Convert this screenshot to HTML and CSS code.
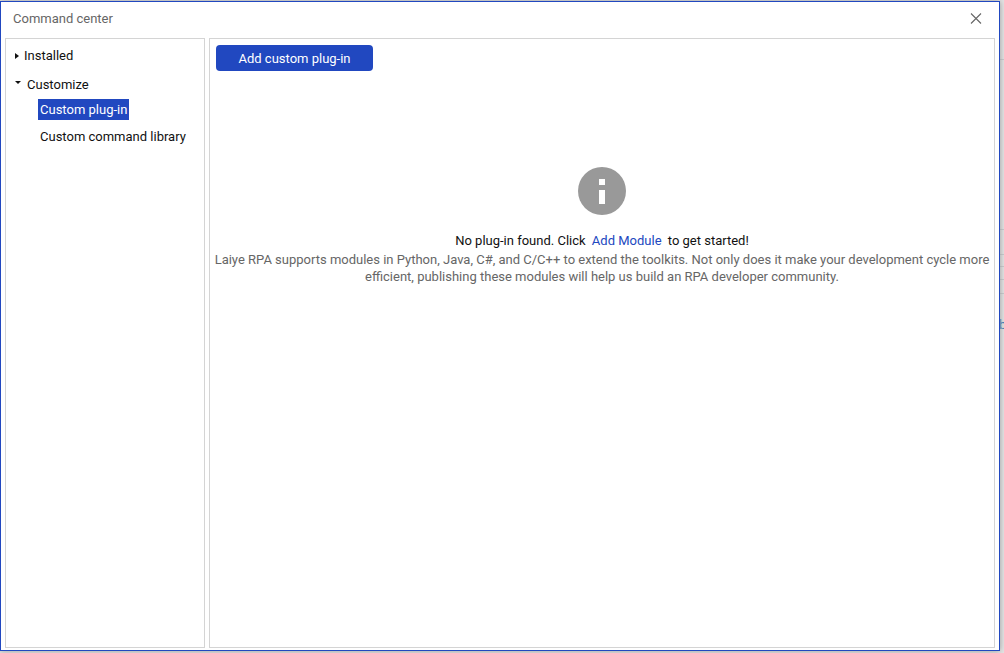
FILE: index.html
```html
<!DOCTYPE html>
<html lang="en">
<head>
<meta charset="utf-8">
<title>Command center</title>
<link rel="stylesheet" href="styles.css">
</head>
<body>
<div class="backdrop" aria-hidden="true">
  <i class="rule r1"></i><i class="rule r2"></i><i class="rule r3"></i><i class="rule r4"></i><i class="rule r5"></i><i class="rule r6"></i>
  <span class="peek">b</span>
</div>
<div class="window">
  <header class="titlebar">
    <h1 class="title">Command center</h1>
    <button class="close" type="button" aria-label="Close">
      <svg width="12" height="12" viewBox="0 0 12 12"><path d="M1 0.5L11 10.5M11 0.5L1 10.5" stroke="#666" stroke-width="1.1" fill="none"/></svg>
    </button>
  </header>
  <div class="content">
    <nav class="panel sidebar">
      <button class="node" type="button" aria-expanded="false">
        <svg class="arrow-right" width="4" height="6" viewBox="0 0 4 6"><path d="M0 0L4 3L0 6Z" fill="#111"/></svg>Installed
      </button>
      <button class="node open" type="button" aria-expanded="true">
        <svg class="arrow-down" width="6" height="3" viewBox="0 0 6 3"><path d="M0 0H6L3 3Z" fill="#111"/></svg>Customize
      </button>
      <ul class="leaves">
        <li><a class="leaf selected" href="#">Custom plug-in</a></li>
        <li><a class="leaf" href="#">Custom command library</a></li>
      </ul>
    </nav>
    <main class="panel main">
      <button class="primary" type="button">Add custom plug-in</button>
      <section class="empty">
        <svg width="48" height="48" viewBox="0 0 48 48"><circle cx="24" cy="24" r="24" fill="#999"/><path d="M21 12h6v6h-6zM21 23h6v14h-6z" fill="#fff"/></svg>
        <p class="lead">No plug-in found. Click <a class="link" href="#">Add Module</a> to get started!</p>
        <p class="note">Laiye RPA supports modules in Python, Java, C#, and C/C++ to extend the toolkits. Not only does it make your development cycle more<br>efficient, publishing these modules will help us build an RPA developer community.</p>
      </section>
    </main>
  </div>
</div>
</body>
</html>
```
FILE: styles.css
```css
* { box-sizing: border-box; }
body {
  margin: 0;
  height: 100vh;
  padding: 1px 4px 2px 0;
  background: #e4e4e4;
  font-family: Roboto, sans-serif;
  font-size: 13px;
  line-height: 17px;
  color: #111;
  overflow: hidden;
}
button { font: inherit; color: inherit; border: 0; background: none; padding: 0; }
h1, p, ul { margin: 0; padding: 0; }
ul { list-style: none; }
a { color: inherit; text-decoration: none; }
.backdrop { position: absolute; top: 0; right: 0; bottom: 0; width: 4px; overflow: hidden; }
.rule { position: absolute; left: 0; right: 0; height: 1px; background: #c6c9cc; }
.r1 { top: 59px; }
.r2 { top: 229px; }
.r3 { top: 254px; }
.r4 { top: 266px; }
.r5 { top: 279px; }
.r6 { top: 293px; }
.peek { position: absolute; top: 316px; left: -1px; color: #3478b8; }
.window {
  position: relative;
  display: flex;
  flex-direction: column;
  height: 100%;
  border: 1px solid #2148c0;
  background: #fff;
  box-shadow: 0 0 6px #999;
}
.titlebar {
  display: flex;
  align-items: center;
  justify-content: space-between;
  height: 36px;
  flex: none;
  padding: 0 17px 3px 12px;
}
.title { font-size: 13px; font-weight: 400; color: #666; }
.close { display: flex; }
.content { display: flex; flex: 1; gap: 4px; padding: 0 4px 2px; min-height: 0; }
.panel { border: 1px solid #d4d4d4; }
.sidebar { flex: 0 0 200px; min-width: 0; padding: 8px; }
.node { display: flex; align-items: center; height: 17px; gap: 5px; padding-left: 1px; }
.node.open { margin-top: 12px; gap: 6px; }
.arrow-down { margin-bottom: 4px; }
.leaves { display: grid; gap: 6px; padding: 6px 0 0 24px; justify-items: start; }
.leaf { display: block; padding: 2px; white-space: nowrap; }
.selected { background: #2148c0; color: #fff; }
.main { flex: 1; min-width: 0; padding-top: 6px; }
.primary {
  display: block;
  width: 157px;
  height: 26px;
  margin-left: 6px;
  border-radius: 4px;
  background: #2148c0;
  color: #fff;
}
.empty { display: flex; flex-direction: column; align-items: center; padding-top: 96px; text-align: center; }
.lead { margin-top: 17px; }
.link { color: #2148c0; margin: 0 3px; }
.note { margin-top: 2px; color: #666; white-space: nowrap; }
```
